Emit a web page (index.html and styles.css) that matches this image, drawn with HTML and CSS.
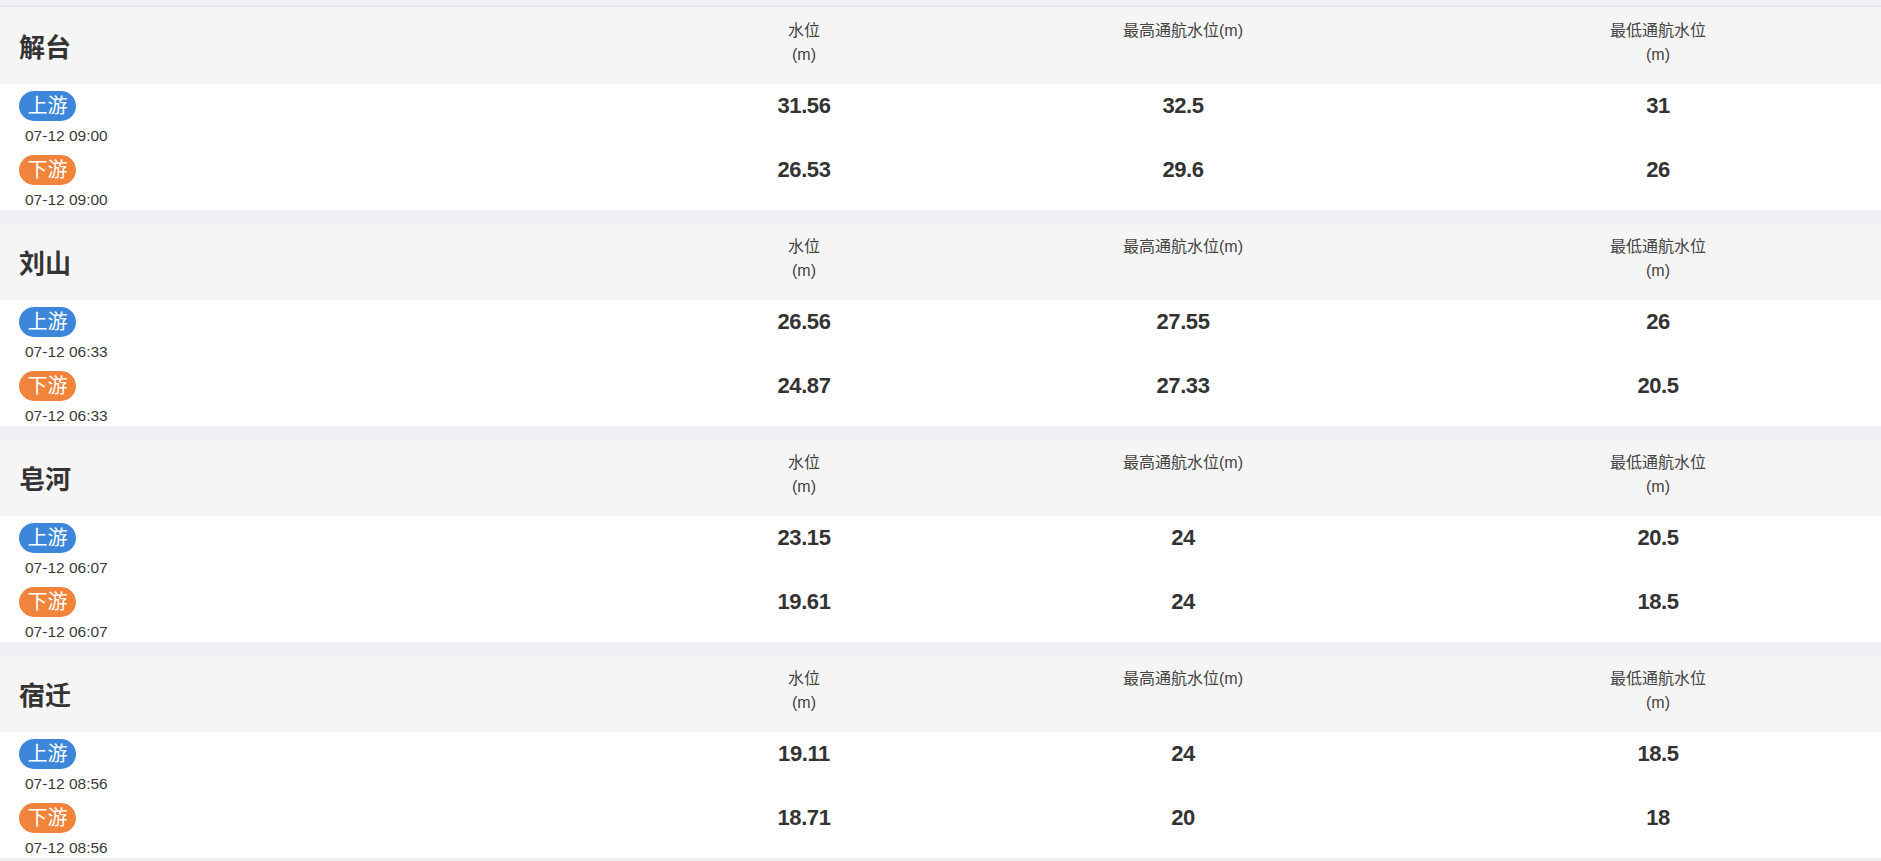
FILE: index.html
```html
<!DOCTYPE html>
<html lang="zh-CN">
<head>
<meta charset="utf-8">
<title>水位</title>
<link rel="stylesheet" href="styles.css">
</head>
<body>
<div class="page">
  <section class="station">
    <div class="head">
      <div class="name">解台</div>
      <div class="label">水位<br>(m)</div>
      <div class="label">最高通航水位(m)</div>
      <div class="label">最低通航水位<br>(m)</div>
    </div>
    <div class="body">
      <div class="row">
        <div class="loc"><span class="badge up">上游</span><span class="time">07-12 09:00</span></div>
        <div class="val">31.56</div><div class="val">32.5</div><div class="val">31</div>
      </div>
      <div class="row">
        <div class="loc"><span class="badge down">下游</span><span class="time">07-12 09:00</span></div>
        <div class="val">26.53</div><div class="val">29.6</div><div class="val">26</div>
      </div>
    </div>
  </section>
  <section class="station">
    <div class="head">
      <div class="name">刘山</div>
      <div class="label">水位<br>(m)</div>
      <div class="label">最高通航水位(m)</div>
      <div class="label">最低通航水位<br>(m)</div>
    </div>
    <div class="body">
      <div class="row">
        <div class="loc"><span class="badge up">上游</span><span class="time">07-12 06:33</span></div>
        <div class="val">26.56</div><div class="val">27.55</div><div class="val">26</div>
      </div>
      <div class="row">
        <div class="loc"><span class="badge down">下游</span><span class="time">07-12 06:33</span></div>
        <div class="val">24.87</div><div class="val">27.33</div><div class="val">20.5</div>
      </div>
    </div>
  </section>
  <section class="station">
    <div class="head">
      <div class="name">皂河</div>
      <div class="label">水位<br>(m)</div>
      <div class="label">最高通航水位(m)</div>
      <div class="label">最低通航水位<br>(m)</div>
    </div>
    <div class="body">
      <div class="row">
        <div class="loc"><span class="badge up">上游</span><span class="time">07-12 06:07</span></div>
        <div class="val">23.15</div><div class="val">24</div><div class="val">20.5</div>
      </div>
      <div class="row">
        <div class="loc"><span class="badge down">下游</span><span class="time">07-12 06:07</span></div>
        <div class="val">19.61</div><div class="val">24</div><div class="val">18.5</div>
      </div>
    </div>
  </section>
  <section class="station">
    <div class="head">
      <div class="name">宿迁</div>
      <div class="label">水位<br>(m)</div>
      <div class="label">最高通航水位(m)</div>
      <div class="label">最低通航水位<br>(m)</div>
    </div>
    <div class="body">
      <div class="row">
        <div class="loc"><span class="badge up">上游</span><span class="time">07-12 08:56</span></div>
        <div class="val">19.11</div><div class="val">24</div><div class="val">18.5</div>
      </div>
      <div class="row">
        <div class="loc"><span class="badge down">下游</span><span class="time">07-12 08:56</span></div>
        <div class="val">18.71</div><div class="val">20</div><div class="val">18</div>
      </div>
    </div>
  </section>
</div>
</body>
</html>
```
FILE: styles.css
```css
html, body {
  margin: 0;
  padding: 0;
}
body {
  background: #efeff4;
  font-family: "Liberation Sans", Arial, "Noto Sans CJK SC", sans-serif;
  color: #333;
}
.page {
  padding-top: 6px;
}
.page > .station:first-child {
  border-top: 1px solid #e4e4e8;
}
.station {
  background: #fff;
  margin-bottom: 13px;
}
.head,
.row {
  display: grid;
  grid-template-columns: 677fr 254fr 504fr 446fr;
}
.head {
  height: 76.5px;
  background: #f5f5f5;
}
.name {
  align-self: center;
  padding-left: 19px;
  font-size: 26px;
  font-weight: bold;
  color: #333;
}
.label {
  text-align: center;
  font-size: 16px;
  line-height: 24px;
  padding-top: 12px;
  color: #444;
}
.body {
  box-sizing: border-box;
  height: 126.5px;
  padding-top: 7px;
}
.row + .row {
  margin-top: 9px;
}
.loc {
  display: flex;
  flex-direction: column;
  align-items: flex-start;
  padding-left: 19px;
}
.badge {
  height: 30px;
  line-height: 30px;
  padding: 0 8.5px;
  border-radius: 15px;
  color: #fff;
  font-size: 20px;
}
.up {
  background: #3d87db;
}
.down {
  background: #f0843c;
}
.time {
  margin-top: 5px;
  padding-left: 6px;
  font-size: 15.5px;
  line-height: 20px;
  color: #3a3a3a;
}
.val {
  text-align: center;
  font-size: 22px;
  letter-spacing: -0.4px;
  font-weight: bold;
  line-height: 30px;
  color: #333;
}
```
